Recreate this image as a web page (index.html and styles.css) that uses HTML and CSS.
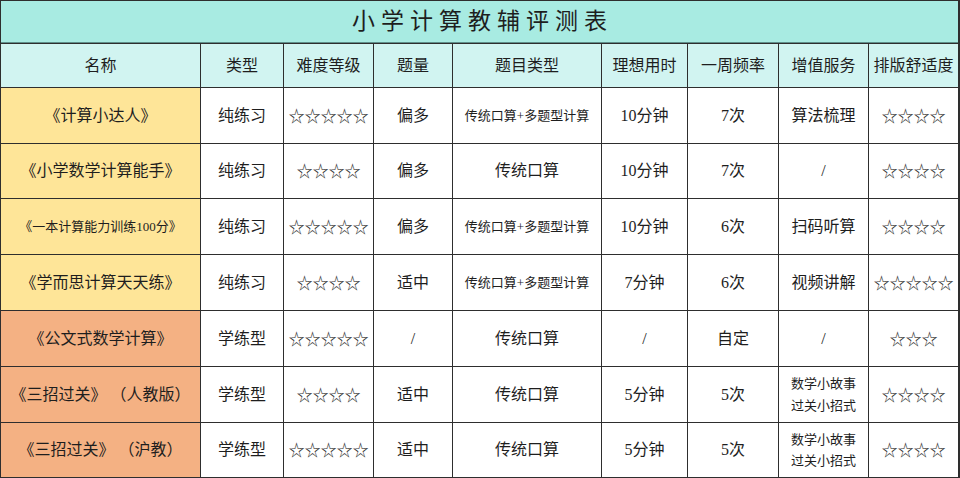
FILE: index.html
```html
<!DOCTYPE html>
<html lang="zh">
<head>
<meta charset="utf-8">
<title>小学计算教辅评测表</title>
<link rel="stylesheet" href="styles.css">
</head>
<body>
<div class="sheet">
  <div class="c title">小学计算教辅评测表</div>

  <div class="c hd">名称</div>
  <div class="c hd">类型</div>
  <div class="c hd">难度等级</div>
  <div class="c hd">题量</div>
  <div class="c hd">题目类型</div>
  <div class="c hd">理想用时</div>
  <div class="c hd">一周频率</div>
  <div class="c hd">增值服务</div>
  <div class="c hd">排版舒适度</div>

  <div class="c nm y">《计算小达人》</div>
  <div class="c">纯练习</div>
  <div class="c st">☆☆☆☆☆</div>
  <div class="c">偏多</div>
  <div class="c sm">传统口算+多题型计算</div>
  <div class="c">10分钟</div>
  <div class="c">7次</div>
  <div class="c">算法梳理</div>
  <div class="c st">☆☆☆☆</div>

  <div class="c nm y">《小学数学计算能手》</div>
  <div class="c">纯练习</div>
  <div class="c st">☆☆☆☆</div>
  <div class="c">偏多</div>
  <div class="c">传统口算</div>
  <div class="c">10分钟</div>
  <div class="c">7次</div>
  <div class="c">/</div>
  <div class="c st">☆☆☆☆</div>

  <div class="c nm y sm">《一本计算能力训练100分》</div>
  <div class="c">纯练习</div>
  <div class="c st">☆☆☆☆☆</div>
  <div class="c">偏多</div>
  <div class="c sm">传统口算+多题型计算</div>
  <div class="c">10分钟</div>
  <div class="c">6次</div>
  <div class="c">扫码听算</div>
  <div class="c st">☆☆☆☆</div>

  <div class="c nm y">《学而思计算天天练》</div>
  <div class="c">纯练习</div>
  <div class="c st">☆☆☆☆</div>
  <div class="c">适中</div>
  <div class="c sm">传统口算+多题型计算</div>
  <div class="c">7分钟</div>
  <div class="c">6次</div>
  <div class="c">视频讲解</div>
  <div class="c st">☆☆☆☆☆</div>

  <div class="c nm o">《公文式数学计算》</div>
  <div class="c">学练型</div>
  <div class="c st">☆☆☆☆☆</div>
  <div class="c">/</div>
  <div class="c">传统口算</div>
  <div class="c">/</div>
  <div class="c">自定</div>
  <div class="c">/</div>
  <div class="c st">☆☆☆</div>

  <div class="c nm o">《三招过关》&nbsp;（人教版）</div>
  <div class="c">学练型</div>
  <div class="c st">☆☆☆☆</div>
  <div class="c">适中</div>
  <div class="c">传统口算</div>
  <div class="c">5分钟</div>
  <div class="c">5次</div>
  <div class="c sm two">数学小故事<br>过关小招式</div>
  <div class="c st">☆☆☆☆</div>

  <div class="c nm o">《三招过关》&nbsp;（沪教）</div>
  <div class="c">学练型</div>
  <div class="c st">☆☆☆☆☆</div>
  <div class="c">适中</div>
  <div class="c">传统口算</div>
  <div class="c">5分钟</div>
  <div class="c">5次</div>
  <div class="c sm two">数学小故事<br>过关小招式</div>
  <div class="c st">☆☆☆☆</div>
</div>
</body>
</html>
```

FILE: styles.css
```css
html, body {
  margin: 0;
  padding: 0;
  background: #ffffff;
}

.sheet {
  width: 960px;
  height: 478px;
  box-sizing: border-box;
  padding: 1px;
  background: #2e2e2e;
  display: grid;
  grid-template-columns: 199px 82px 89px 78px 148px 85px 90px 89px 89px;
  grid-template-rows: 42px 43px 55px 54px 55px 55px 55px 55px 54px;
  gap: 1px;
  font-family: "Liberation Serif", "Noto Sans CJK SC", serif;
  color: #1e1e1e;
}

.c {
  background: #ffffff;
  display: flex;
  align-items: center;
  justify-content: center;
  text-align: center;
  font-size: 16px;
  line-height: 1.2;
  white-space: nowrap;
}

.title {
  grid-column: 1 / -1;
  background: #a8ebe2;
  font-size: 23px;
  letter-spacing: 6px;
  padding-left: 6px;
  border-bottom: 1px solid #5f8f8a;
}

.hd {
  background: #d1f4f1;
}

.y {
  background: #fee598;
}

.o {
  background: #f4b183;
}

.sm {
  font-size: 13px;
}

.two {
  line-height: 1.65;
}

.st {
  font-family: "Noto Sans CJK SC", sans-serif;
  font-size: 16px;
  color: #333333;
}
```
